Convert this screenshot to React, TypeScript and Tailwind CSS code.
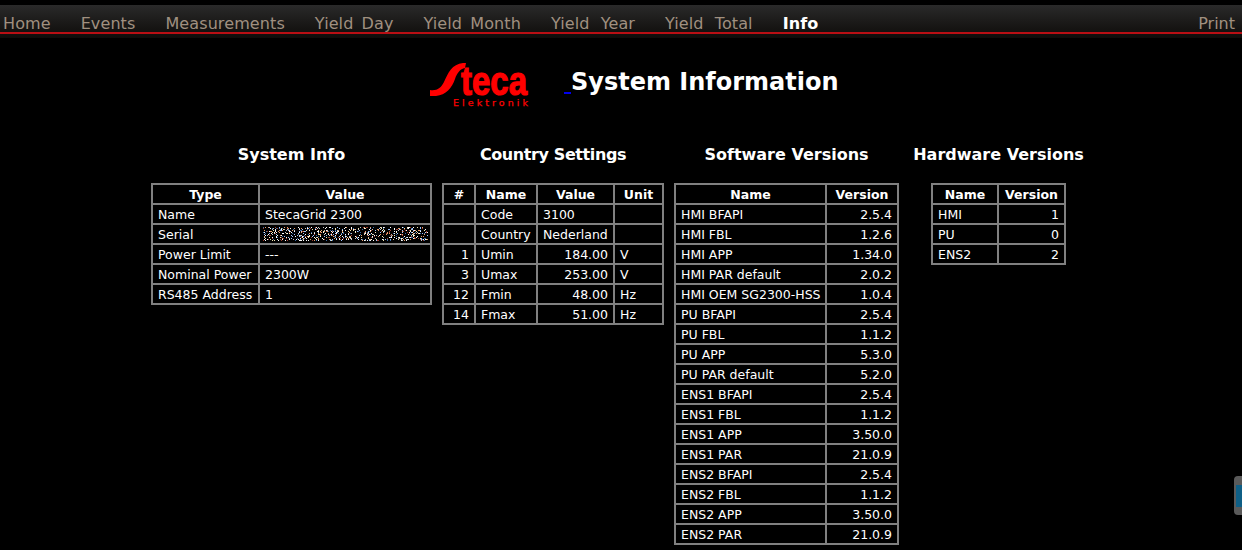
const font = "font-['DejaVu_Sans',Verdana,sans-serif]";

const navItems = [
  { label: "Home", cls: "" },
  { label: "Events", cls: "" },
  { label: "Measurements", cls: "" },
  { label: "Yield Day", cls: "" },
  { label: "Yield Month", cls: "" },
  { label: "Yield Year", cls: "[word-spacing:6px]" },
  { label: "Yield Total", cls: "[word-spacing:6px]" },
];

type Align = "l" | "r";

// speckled block that blurs out the serial number
function SerialNoise() {
  const colors = ["#ffffff", "#ffffff", "#f5e6b0", "#9fc4ff", "#c8c8c8", "#e8a070", "#3f6fa8", "#a04030"];
  const dots = [];
  let seed = 7;
  for (let x = 0; x < 165; x += 1) {
    for (let y = 0; y < 14; y += 1) {
      seed = (seed * 1103515245 + 12345) & 0x7fffffff;
      if ((seed >> 10) % 100 < 27) {
        dots.push(<rect key={x + "-" + y} x={x} y={y} width="1" height="1" fill={colors[(seed >> 17) % colors.length]} />);
      }
    }
  }
  return (
    <svg width="165" height="14" className="-ml-[2px] -mt-[2px] block">
      {dots}
    </svg>
  );
}

function SectionTable(props: {
  widths: number[];
  head: string[];
  rows: React.ReactNode[][];
  aligns: Align[];
}) {
  const total = props.widths.reduce((a, b) => a + b, 0);
  return (
    <table className="table-fixed border-collapse text-[12.5px] leading-[16px] text-white" style={{ width: total }}>
      <colgroup>
        {props.widths.map((w, i) => (
          <col key={i} style={{ width: w }} />
        ))}
      </colgroup>
      <thead>
        <tr>
          {props.head.map((h, i) => (
            <th key={i} className="border-2 border-[#808080] h-[20px] pt-[2px] pb-0 px-0 text-center font-bold">
              {h}
            </th>
          ))}
        </tr>
      </thead>
      <tbody>
        {props.rows.map((row, r) => (
          <tr key={r}>
            {row.map((c, i) => (
              <td
                key={i}
                className={
                  "border-2 border-[#808080] h-[20px] pt-[2px] pb-0 px-[5px] whitespace-nowrap " +
                  (props.aligns[i] === "r" ? "text-right" : "text-left")
                }
              >
                {c}
              </td>
            ))}
          </tr>
        ))}
      </tbody>
    </table>
  );
}

function Column(props: { title: string; width: number; titleClass?: string; children: React.ReactNode }) {
  return (
    <div className="flex flex-col items-center gap-[18px]" style={{ width: props.width }}>
      <h2 className={"text-[16px] leading-[20px] font-bold text-white whitespace-nowrap " + (props.titleClass || "")}>
        {props.title}
      </h2>
      {props.children}
    </div>
  );
}

function Logo() {
  return (
    <svg width="102" height="48" viewBox="0 0 102 48" className="block overflow-visible">
      <path
        d="M0 30 C7 31 11 28 14 22 C18 13 22 4 33 3 L36 3 L35 8 C30 9 27 13 25 19 C22 28 16 35 6 36 L0 36 Z"
        fill="#ff0000"
      />
      <text
        x="31"
        y="35"
        fill="#ff0000"
        stroke="#ff0000"
        strokeWidth="1.2"
        fontSize="40"
        fontWeight="700"
        textLength="66"
        lengthAdjust="spacingAndGlyphs"
        fontFamily="'Liberation Sans',sans-serif"
      >
        teca
      </text>
      <text
        x="23"
        y="45.5"
        fill="#ff0000"
        stroke="#ff0000"
        strokeWidth="0.25"
        fontSize="9.5"
        textLength="75"
        fontFamily="'DejaVu Sans',sans-serif"
      >
        Elektronik
      </text>
    </svg>
  );
}

export default function App() {
  return (
    <div className={"relative h-[550px] w-full overflow-hidden bg-black " + font}>
      <nav className="mt-[5px] h-[33px] bg-gradient-to-b from-[#2a2a2a] to-[#0e0c0a]">
        <div className="flex h-[29px] items-start justify-between border-b-2 border-[#b80f14] pl-[3px] pr-[7px] pt-[8px]">
          <div className="flex gap-[30px] text-[16px] leading-[22px] tracking-[0.1px] text-[#a09080] [word-spacing:3px]">
            {navItems.map((n) => (
              <span key={n.label} className={n.cls}>
                {n.label}
              </span>
            ))}
            <span className="font-bold text-white">Info</span>
          </div>
          <span className="text-[16px] leading-[22px] text-[#a09080]">Print</span>
        </div>
      </nav>

      <div className="mt-[22px] flex h-[48px] items-start pl-[430px]">
        <Logo />
        <span className="ml-[32px] mt-[1px] h-[33px] w-[7px] border-b-2 border-[#0000ee]" />
        <h1 className="mt-[2px] text-[24px] leading-[40px] font-bold text-white">System Information</h1>
      </div>

      <div className="mt-[37px] flex items-start pl-[151px]">
        <Column title="System Info" width={281}>
          <SectionTable
            widths={[107, 172]}
            head={["Type", "Value"]}
            aligns={["l", "l"]}
            rows={[
              ["Name", "StecaGrid 2300"],
              ["Serial", <SerialNoise />],
              ["Power Limit", "---"],
              ["Nominal Power", "2300W"],
              ["RS485 Address", "1"],
            ]}
          />
        </Column>
        <div className="ml-[10px]">
          <Column title="Country Settings" titleClass="tracking-[-0.4px]" width={222}>
            <SectionTable
              widths={[32, 62, 77, 49]}
              head={["#", "Name", "Value", "Unit"]}
              aligns={["r", "l", "r", "l"]}
              rows={[
                ["", "Code", <span className="block text-left">3100</span>, ""],
                ["", "Country", <span className="block text-left">Nederland</span>, ""],
                [1, "Umin", "184.00", "V"],
                [3, "Umax", "253.00", "V"],
                [12, "Fmin", "48.00", "Hz"],
                [14, "Fmax", "51.00", "Hz"],
              ]}
            />
          </Column>
        </div>
        <div className="ml-[10px]">
          <Column title="Software Versions" width={225}>
            <SectionTable
              widths={[151, 72]}
              head={["Name", "Version"]}
              aligns={["l", "r"]}
              rows={[
                ["HMI BFAPI", "2.5.4"],
                ["HMI FBL", "1.2.6"],
                ["HMI APP", "1.34.0"],
                ["HMI PAR default", "2.0.2"],
                ["HMI OEM SG2300-HSS", "1.0.4"],
                ["PU BFAPI", "2.5.4"],
                ["PU FBL", "1.1.2"],
                ["PU APP", "5.3.0"],
                ["PU PAR default", "5.2.0"],
                ["ENS1 BFAPI", "2.5.4"],
                ["ENS1 FBL", "1.1.2"],
                ["ENS1 APP", "3.50.0"],
                ["ENS1 PAR", "21.0.9"],
                ["ENS2 BFAPI", "2.5.4"],
                ["ENS2 FBL", "1.1.2"],
                ["ENS2 APP", "3.50.0"],
                ["ENS2 PAR", "21.0.9"],
              ]}
            />
          </Column>
        </div>
        <div className="ml-[15px]">
          <Column title="Hardware Versions" width={169}>
            <SectionTable
              widths={[66, 67]}
              head={["Name", "Version"]}
              aligns={["l", "r"]}
              rows={[
                ["HMI", 1],
                ["PU", 0],
                ["ENS2", 2],
              ]}
            />
          </Column>
        </div>
      </div>

      <div className="absolute right-0 top-[476px] flex h-[39px] w-[8px] items-center rounded-l-[4px] bg-[#5a5a5a] pl-[2px]">
        <div className="h-[22px] w-full bg-[#0f5f86]" />
      </div>
    </div>
  );
}
